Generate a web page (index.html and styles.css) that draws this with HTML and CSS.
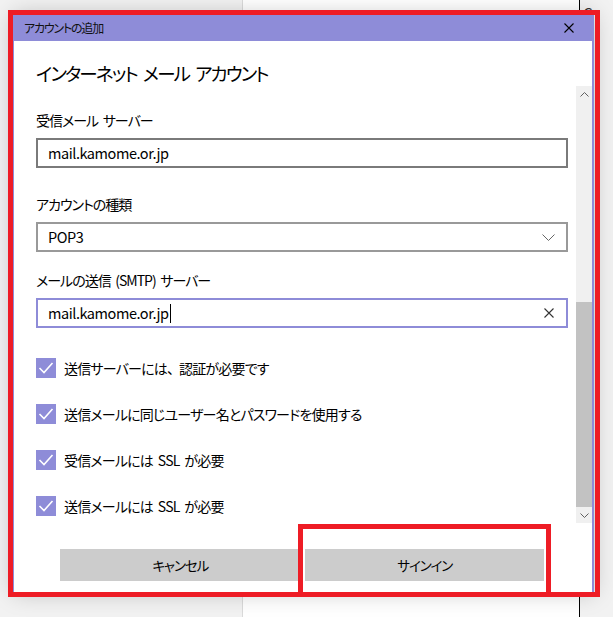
FILE: index.html
```html
<!DOCTYPE html>
<html lang="ja">
<head>
<meta charset="utf-8">
<title>アカウントの追加</title>
<link rel="stylesheet" href="styles.css">
</head>
<body>
<div class="page">
  <div class="pane-left"></div>
  <div class="pane-mid"></div>
  <div class="pane-right">
    <span class="edge-glyph">C</span>
    <span class="edge-dash"></span>
  </div>
</div>

<div class="dialog">
  <div class="titlebar">
    <span class="title">アカウントの追加</span>
    <svg class="close" width="10" height="10" viewBox="0 0 10 10"><path d="M0.5 0.5 L9.5 9.5 M9.5 0.5 L0.5 9.5" stroke="#000" stroke-width="1.1" fill="none"/></svg>
  </div>
  <div class="body">
    <h1 class="heading">インターネット メール アカウント</h1>
    <div class="scroll">
      <div class="form">
        <div class="label">受信メール サーバー</div>
        <div class="field field-plain"><span class="value">mail.kamome.or.jp</span></div>

        <div class="label label-2">アカウントの種類</div>
        <div class="field field-select">
          <span class="value">POP3</span>
          <svg class="chev" width="13" height="7" viewBox="0 0 13 7"><path d="M0.5 0.5 L6.5 6.5 L12.5 0.5" stroke="#666" stroke-width="1" fill="none"/></svg>
        </div>

        <div class="label label-3">メールの送信 (SMTP) サーバー</div>
        <div class="field field-focus">
          <span class="value">mail.kamome.or.jp</span><span class="caret"></span>
          <svg class="clear" width="10" height="10" viewBox="0 0 10 10"><path d="M0.5 0.5 L9.5 9.5 M9.5 0.5 L0.5 9.5" stroke="#333" stroke-width="1.1" fill="none"/></svg>
        </div>

        <div class="checks">
          <div class="check-row"><span class="box"><svg width="20" height="20" viewBox="0 0 20 20"><path d="M3.5 10 L8 14.5 L16.5 5" stroke="#fff" stroke-width="1.6" fill="none"/></svg></span><span class="check-text">送信サーバーには<span class="comma">、</span>認証が必要です</span></div>
          <div class="check-row"><span class="box"><svg width="20" height="20" viewBox="0 0 20 20"><path d="M3.5 10 L8 14.5 L16.5 5" stroke="#fff" stroke-width="1.6" fill="none"/></svg></span><span class="check-text">送信メールに同じユーザー名とパスワードを使用する</span></div>
          <div class="check-row"><span class="box"><svg width="20" height="20" viewBox="0 0 20 20"><path d="M3.5 10 L8 14.5 L16.5 5" stroke="#fff" stroke-width="1.6" fill="none"/></svg></span><span class="check-text">受信メールには SSL が必要</span></div>
          <div class="check-row"><span class="box"><svg width="20" height="20" viewBox="0 0 20 20"><path d="M3.5 10 L8 14.5 L16.5 5" stroke="#fff" stroke-width="1.6" fill="none"/></svg></span><span class="check-text">送信メールには SSL が必要</span></div>
        </div>
      </div>
      <div class="scrollbar">
        <div class="sb-arrow"><svg width="9" height="5" viewBox="0 0 9 5"><path d="M0.5 4.5 L4.5 0.5 L8.5 4.5" stroke="#606060" stroke-width="1" fill="none"/></svg></div>
        <div class="sb-track"></div>
        <div class="sb-thumb"></div>
        <div class="sb-arrow"><svg width="9" height="5" viewBox="0 0 9 5"><path d="M0.5 0.5 L4.5 4.5 L8.5 0.5" stroke="#606060" stroke-width="1" fill="none"/></svg></div>
      </div>
    </div>
    <div class="footer">
      <button class="btn">キャンセル</button>
      <button class="btn">サインイン</button>
    </div>
  </div>
</div>

<div class="mark mark-outer"></div>
<div class="mark mark-inner"></div>
</body>
</html>
```

FILE: styles.css
```css
* { box-sizing: border-box; }

html, body {
  margin: 0;
  padding: 0;
  width: 613px;
  height: 617px;
  overflow: hidden;
}

body {
  font-family: "Noto Sans CJK JP", "Noto Sans", sans-serif;
  font-feature-settings: "palt";
  color: #000;
  position: relative;
}

.page {
  display: flex;
  height: 617px;
}

.pane-left {
  width: 243px;
  background: #f2f2f2;
  border-right: 1px solid #dadada;
}

.pane-mid {
  flex: 1;
  background: #ffffff;
  border-right: 1px solid #000;
}

.pane-right {
  width: 33px;
  background: #f2f2f2;
  display: flex;
  flex-direction: column;
  padding-left: 2px;
}

.edge-glyph {
  font-size: 15px;
  line-height: 18px;
  margin-top: 4px;
  margin-left: 1px;
  color: #333;
  font-feature-settings: normal;
}

.edge-dash {
  width: 10px;
  height: 1px;
  background: #444;
  margin-top: 52px;
  margin-left: 2px;
}

.dialog {
  position: absolute;
  left: 13px;
  top: 14px;
  width: 581px;
  height: 579px;
  background: #fff;
  border-left: 1px solid #8e8cd8;
  border-right: 2px solid #8e8cd8;
  border-bottom: 1px solid #8e8cd8;
  box-shadow: 0 0 22px rgba(0, 0, 0, 0.22);
  display: flex;
  flex-direction: column;
}

.titlebar {
  height: 27px;
  background: #8e8cd8;
  display: flex;
  align-items: center;
  justify-content: space-between;
  padding: 0 18px 0 10px;
  flex: none;
}

.title {
  font-size: 12px;
  line-height: 27px;
  letter-spacing: -1.2px;
  color: #111;
}

.close { display: block; }

.body {
  flex: 1;
  display: flex;
  flex-direction: column;
}

.heading {
  margin: 0;
  height: 45px;
  padding: 20px 0 0 22px;
  font-size: 18.5px;
  line-height: 25px;
  letter-spacing: -1.8px;
  word-spacing: 3.5px;
  font-weight: 400;
}

.scroll {
  height: 437px;
  display: flex;
}

.form {
  flex: 1;
  padding: 24px 8px 0 22px;
  display: flex;
  flex-direction: column;
}

.label {
  font-size: 14px;
  line-height: 20px;
  letter-spacing: -1px;
  word-spacing: 2.5px;
  margin-bottom: 8px;
}

.label-2 { margin-top: 26px; }
.label-3 { margin-top: 18px; }

.field {
  height: 30px;
  border: 2px solid #7a7a7a;
  display: flex;
  align-items: center;
  padding: 0 10px 0 10px;
}

.field-select {
  border-color: #999999;
  justify-content: space-between;
  padding-right: 11px;
}

.field-focus {
  border-color: #8e8cd8;
  padding-right: 12px;
}

.value {
  font-size: 14.5px;
  line-height: 20px;
  letter-spacing: -0.45px;
  font-feature-settings: normal;
}

.caret {
  width: 1px;
  height: 19px;
  background: #000;
  margin-left: 1px;
}

.clear { margin-left: auto; display: block; }
.chev { display: block; }

.checks {
  margin-top: 30px;
  display: flex;
  flex-direction: column;
  gap: 26px;
}

.check-row {
  display: flex;
  align-items: center;
  height: 20px;
  gap: 8px;
}

.check-text {
  font-size: 14px;
  line-height: 20px;
  letter-spacing: -0.8px;
  word-spacing: 2.5px;
}

.comma {
  font-feature-settings: normal;
  letter-spacing: -2px;
}

.box {
  width: 20px;
  height: 20px;
  background: #8e8cd8;
  flex: none;
}

.box svg { display: block; }

.scrollbar {
  width: 16px;
  background: #f0f0f0;
  display: flex;
  flex-direction: column;
}

.sb-arrow {
  height: 16px;
  display: flex;
  align-items: center;
  justify-content: center;
  flex: none;
}

.sb-track { flex: 1; }

.sb-thumb {
  height: 205px;
  background: #c2c2c2;
  flex: none;
}

.footer {
  display: flex;
  gap: 5px;
  padding: 26px 48px 0 46px;
}

.btn {
  flex: 1;
  height: 32px;
  border: none;
  background: #cccccc;
  font-family: inherit;
  font-feature-settings: "palt";
  font-size: 13.5px;
  letter-spacing: -1.1px;
  color: #000;
  padding: 0 0 0 1px;
}

.mark {
  position: absolute;
  border: 5px solid #ee1c25;
  pointer-events: none;
}

.mark-outer {
  left: 8px;
  top: 10px;
  width: 592px;
  height: 587px;
}

.mark-inner {
  left: 298px;
  top: 524px;
  width: 253px;
  height: 73px;
}
```
